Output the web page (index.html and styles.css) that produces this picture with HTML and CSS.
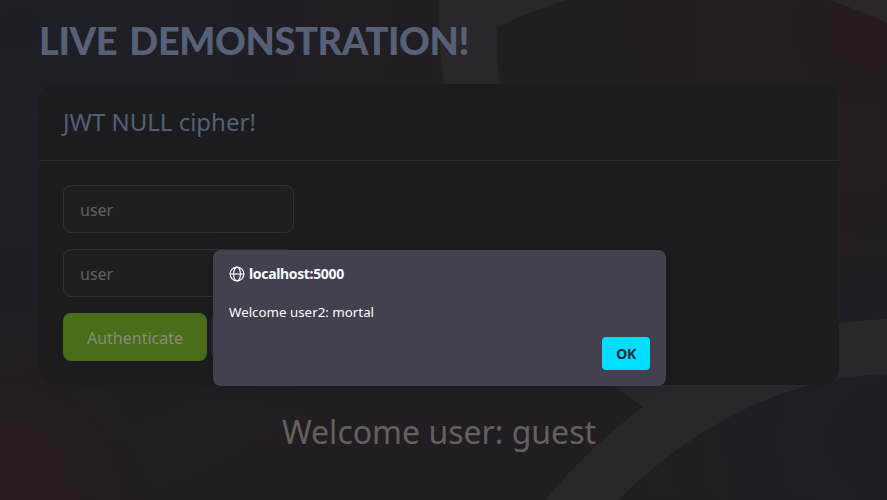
FILE: index.html
```html
<!DOCTYPE html>
<html lang="en">
<head>
<meta charset="utf-8">
<title>Live demonstration</title>
<link rel="stylesheet" href="styles.css">
</head>
<body>
<svg class="backdrop" viewBox="0 0 887 500" aria-hidden="true">
  <path d="M439 0H566Q520 15 497 28Q496 60 500 84L505 120H448L444 84Q438 40 439 0Z"/>
  <path d="M829 0H887V23Q862 11 829 0Z"/>
  <path d="M887 319Q860 320 838 324L700 360L610 383Q625 395 643 407Q590 446 545 500H618Q742 379 887 374Z"/>
</svg>
<main class="page">
  <h1 class="title">LIVE DEMONSTRATION!</h1>
  <section class="card">
    <header class="card-header"><h2>JWT NULL cipher!</h2></header>
    <form class="card-body">
      <input class="field" type="text" placeholder="user">
      <input class="field" type="text" placeholder="user">
      <div class="actions">
        <button class="btn btn-primary" type="button">Authenticate</button>
        <button class="btn btn-secondary" type="button" aria-label="Continue"></button>
      </div>
    </form>
  </section>
  <p class="welcome">Welcome user: guest</p>
</main>
<div class="dialog" role="alertdialog">
  <div class="origin">
    <svg class="globe" viewBox="0 0 16 16" aria-hidden="true">
      <circle cx="8" cy="8" r="6.9"/>
      <ellipse cx="8" cy="8" rx="3.4" ry="6.9"/>
      <path d="M1 8H15"/>
    </svg>
    <span>localhost:5000</span>
  </div>
  <p class="message">Welcome user2: mortal</p>
  <button class="ok" type="button">OK</button>
</div>
</body>
</html>
```
FILE: styles.css
```css
* { box-sizing: border-box; }

body {
  margin: 0;
  height: 500px;
  overflow: hidden;
  font-family: "Noto Sans", sans-serif;
  background:
    radial-gradient(circle at 0 490px, #291b22 0, rgba(41, 27, 34, 0) 150px),
    radial-gradient(circle at 870px 30px, rgba(40, 27, 30, .6) 0, rgba(40, 27, 30, 0) 260px),
    radial-gradient(circle at 887px 440px, #1d1f26 0, rgba(29, 31, 38, 0) 260px),
    radial-gradient(circle at 20px 30px, #1e1f26 0, rgba(30, 31, 38, 0) 520px),
    #221d22;
}

.backdrop {
  position: absolute;
  inset: 0;
  width: 887px;
  height: 500px;
  fill: #29272c;
}

.page {
  position: relative;
  width: 800px;
  height: 500px;
  margin-left: 39px;
}

.title {
  margin: 0;
  height: 84px;
  padding-top: 14px;
  font-family: Lato, sans-serif;
  font-size: 38px;
  line-height: 52px;
  font-weight: 900;
  letter-spacing: -0.4px;
  word-spacing: 3.5px;
  white-space: nowrap;
  color: #566177;
}

.card {
  height: 301px;
  border-radius: 16px;
  background: #1c1c1e;
}

.card-header {
  height: 77px;
  padding: 20px 24px;
  border-bottom: 1px solid #2d2d30;
}

.card-header h2 {
  margin: 0;
  font-size: 24px;
  line-height: 36px;
  font-weight: 400;
  color: #536077;
}

.card-body {
  display: flex;
  flex-direction: column;
  gap: 16px;
  padding: 24px;
}

.field {
  width: 231px;
  height: 48px;
  padding: 1px 16px 0;
  border: 1px solid #303134;
  border-radius: 8px;
  background: #1e1f22;
  font: 16px "Noto Sans", sans-serif;
}

.field::placeholder { color: #65605d; opacity: 1; }

.actions { display: flex; gap: 4px; }

.btn {
  height: 48px;
  padding: 1px 0 0;
  border: 0;
  border-radius: 8px;
  font: 16px "Noto Sans", sans-serif;
}

.btn-primary { width: 144px; background: #4a6d1a; color: #858b7d; }
.btn-secondary { width: 80px; background: #292846; }

.welcome {
  margin: 23px 0 0;
  font-size: 32px;
  line-height: 48px;
  text-align: center;
  color: #66605c;
}

.dialog {
  position: absolute;
  left: 213px;
  top: 250px;
  width: 453px;
  height: 136px;
  padding: 14px 16px 16px;
  display: flex;
  flex-direction: column;
  border-radius: 8px;
  background: #43414d;
  box-shadow: 0 2px 14px rgba(0, 0, 0, .2);
  color: #fbfbfe;
  font-size: 13.33px;
  line-height: 20px;
}

.origin {
  display: flex;
  align-items: center;
  gap: 4px;
  font-size: 14px;
  font-weight: 700;
  letter-spacing: -0.34px;
}

.globe {
  width: 16px;
  height: 16px;
  fill: none;
  stroke: #fbfbfe;
  stroke-width: 1.2;
}

.message { margin: 18px 0 0; }

.ok {
  width: 48px;
  height: 33px;
  margin: auto 0 0 auto;
  padding: 0;
  border: 0;
  border-radius: 4px;
  background: #00ddff;
  color: #2b2a33;
  font: 700 14px "Noto Sans", sans-serif;
  letter-spacing: -0.5px;
}
```
